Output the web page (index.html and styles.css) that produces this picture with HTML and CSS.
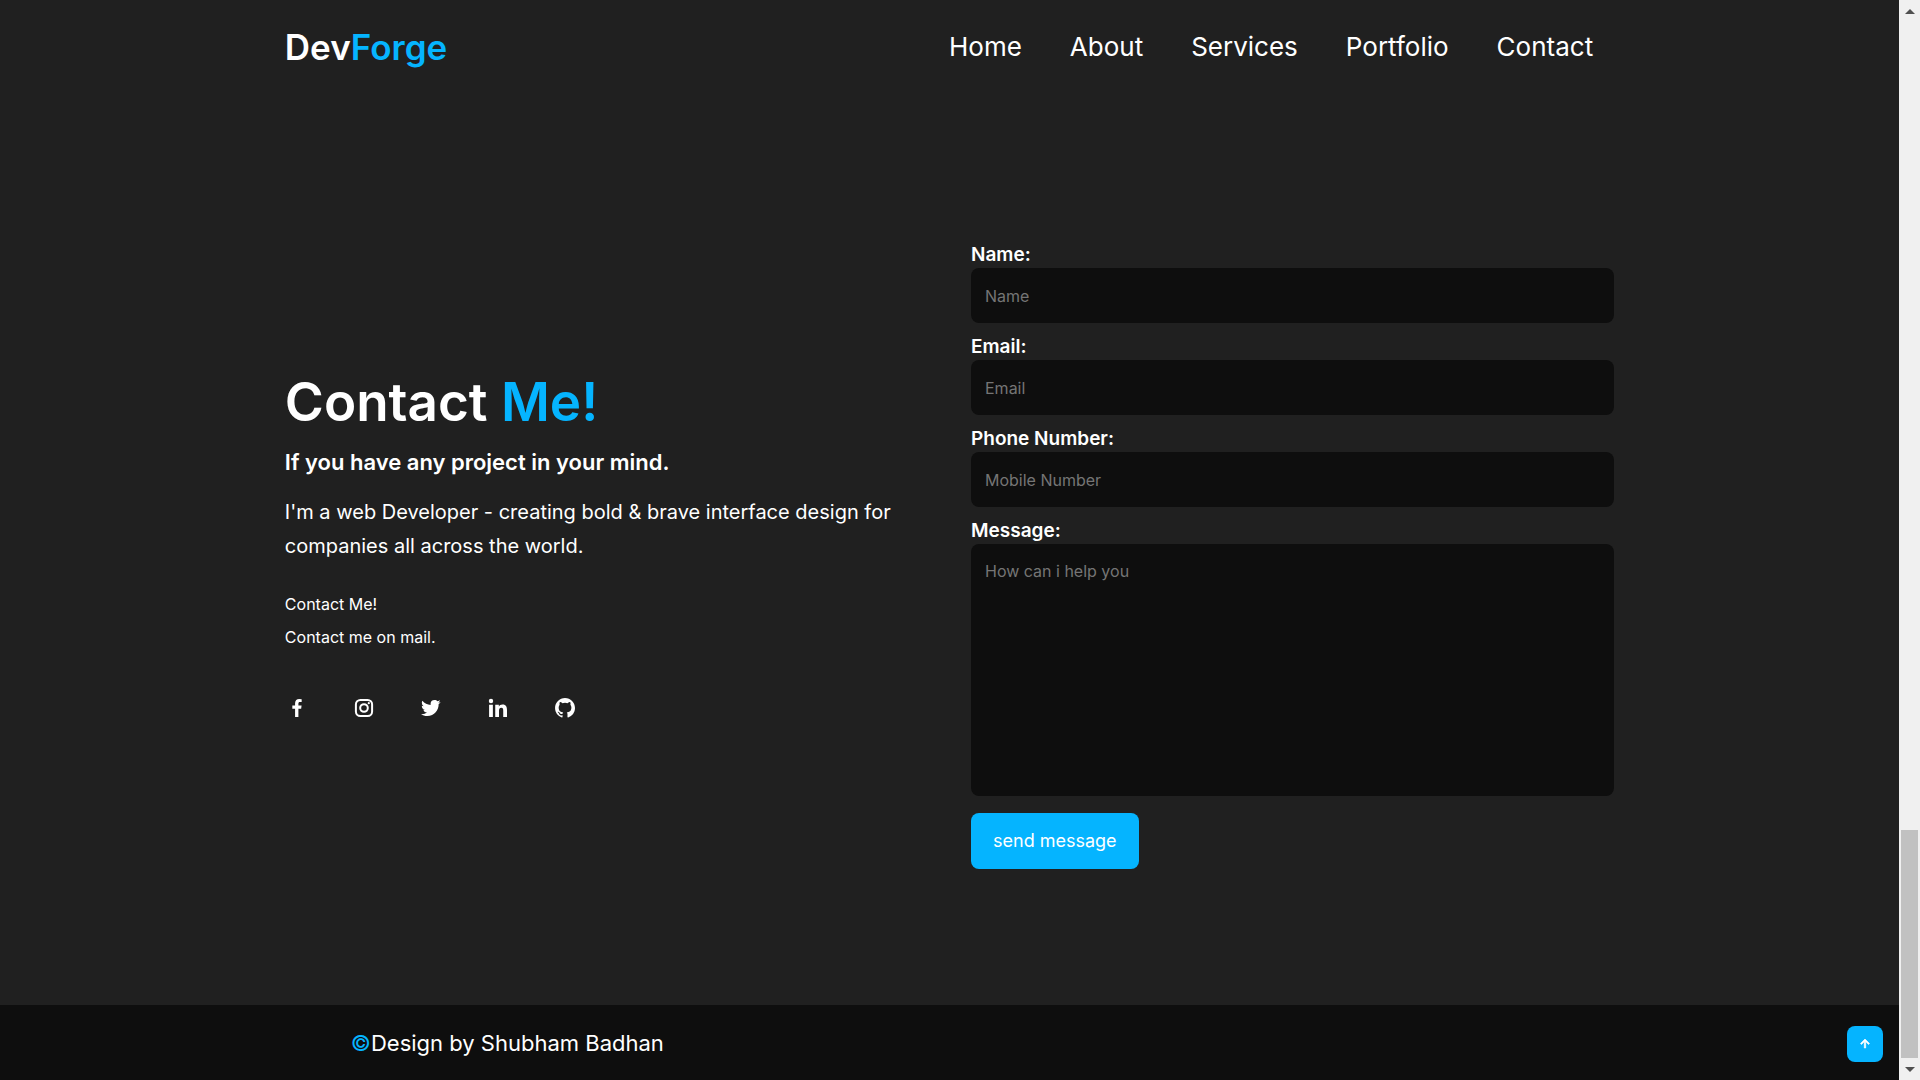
FILE: index.html
```html
<!DOCTYPE html>
<html lang="en">
<head>
<meta charset="utf-8">
<meta name="viewport" content="width=device-width, initial-scale=1">
<title>DevForge</title>
<link rel="stylesheet" href="styles.css">
</head>
<body>
<div class="page">
  <header class="header">
    <a class="logo" href="#home">Dev<span class="accent">Forge</span></a>
    <nav class="nav">
      <a href="#home">Home</a>
      <a href="#about">About</a>
      <a href="#services">Services</a>
      <a href="#portfolio">Portfolio</a>
      <a href="#contact">Contact</a>
    </nav>
  </header>

  <main class="contact" id="contact">
    <section class="intro">
      <h1 class="title">Contact <span class="accent">Me!</span></h1>
      <h2 class="subtitle">If you have any project in your mind.</h2>
      <p class="lead">I'm a web Developer - creating bold &amp; brave interface design for companies all across the world.</p>
      <ul class="notes">
        <li>Contact Me!</li>
        <li>Contact me on mail.</li>
      </ul>
      <div class="social">
        <a href="#facebook" aria-label="Facebook"><svg viewBox="0 0 24 24"><path d="M13.397 20.997v-8.196h2.765l.411-3.209h-3.176V7.548c0-.926.258-1.56 1.587-1.56h1.684V3.127A22.336 22.336 0 0 0 14.201 3c-2.444 0-4.122 1.492-4.122 4.231v2.355H7.332v3.209h2.753v8.202h3.312z"/></svg></a>
        <a href="#instagram" aria-label="Instagram"><svg viewBox="0 0 24 24"><rect class="line" x="3.9" y="3.9" width="16.2" height="16.2" rx="4.5"/><circle class="line" cx="12" cy="12" r="3.8"/><circle cx="16.8" cy="7.2" r="1.1"/></svg></a>
        <a href="#twitter" aria-label="Twitter"><svg viewBox="0 0 24 24"><path d="M19.633 7.997c.013.175.013.349.013.523 0 5.325-4.053 11.461-11.46 11.461-2.282 0-4.402-.661-6.186-1.809.324.037.636.05.973.05a8.07 8.07 0 0 0 5.001-1.721 4.036 4.036 0 0 1-3.767-2.793c.249.037.499.062.761.062.361 0 .724-.05 1.061-.137a4.027 4.027 0 0 1-3.23-3.953v-.05c.537.299 1.16.486 1.82.511a4.022 4.022 0 0 1-1.796-3.354c0-.748.199-1.434.548-2.032a11.457 11.457 0 0 0 8.306 4.215c-.062-.3-.1-.611-.1-.923a4.026 4.026 0 0 1 4.028-4.028c1.16 0 2.207.486 2.943 1.272a7.957 7.957 0 0 0 2.556-.973 4.02 4.02 0 0 1-1.771 2.22 8.073 8.073 0 0 0 2.319-.624 8.645 8.645 0 0 1-2.019 2.083z"/></svg></a>
        <a href="#linkedin" aria-label="LinkedIn"><svg viewBox="0 0 24 24"><circle cx="4.983" cy="5.009" r="2.188"/><path d="M9.237 8.855v12.139h3.769v-6.003c0-1.584.298-3.118 2.262-3.118 1.937 0 1.961 1.811 1.961 3.218v5.904H21v-6.657c0-3.27-.704-5.783-4.526-5.783-1.835 0-3.065 1.007-3.568 1.96h-.051v-1.66H9.237zm-6.142 0H6.87v12.139H3.095z"/></svg></a>
        <a href="#github" aria-label="GitHub"><svg viewBox="0 0 24 24"><path d="M12.026 2c-5.509 0-9.974 4.465-9.974 9.974 0 4.406 2.857 8.145 6.821 9.465.499.09.679-.217.679-.481 0-.237-.008-.865-.011-1.696-2.775.602-3.361-1.338-3.361-1.338-.452-1.152-1.107-1.459-1.107-1.459-.905-.619.069-.605.069-.605 1.002.07 1.527 1.028 1.527 1.028.89 1.524 2.336 1.084 2.902.829.091-.645.351-1.085.635-1.334-2.214-.251-4.542-1.107-4.542-4.93 0-1.087.389-1.979 1.024-2.675-.101-.253-.446-1.268.099-2.64 0 0 .837-.269 2.742 1.021a9.582 9.582 0 0 1 2.496-.336 9.554 9.554 0 0 1 2.496.336c1.906-1.291 2.742-1.021 2.742-1.021.545 1.372.203 2.387.099 2.64.64.696 1.024 1.587 1.024 2.675 0 3.833-2.33 4.675-4.552 4.922.355.308.675.916.675 1.846 0 1.334-.012 2.41-.012 2.737 0 .267.178.577.687.479C19.146 20.115 22 16.379 22 11.974 22 6.465 17.535 2 12.026 2z"/></svg></a>
      </div>
    </section>

    <form class="form">
      <div class="field">
        <label for="name">Name:</label>
        <input id="name" type="text" placeholder="Name">
      </div>
      <div class="field">
        <label for="email">Email:</label>
        <input id="email" type="email" placeholder="Email">
      </div>
      <div class="field">
        <label for="phone">Phone Number:</label>
        <input id="phone" type="tel" placeholder="Mobile Number">
      </div>
      <div class="field">
        <label for="message">Message:</label>
        <textarea id="message" placeholder="How can i help you"></textarea>
      </div>
      <button class="send" type="submit">send message</button>
    </form>
  </main>

  <footer class="footer">
    <p class="copyright"><span class="accent">©</span>Design by Shubham Badhan</p>
    <a class="to-top" href="#home" aria-label="Back to top"><svg viewBox="0 0 24 24"><path d="m11 8.414V18h2V8.414l4.293 4.293 1.414-1.414L12 4.586l-6.707 6.707 1.414 1.414z"/></svg></a>
  </footer>
</div>

<div class="scrollbar" aria-hidden="true">
  <svg class="scroll-arrow" viewBox="0 0 10 5"><path d="M5 0l5 5H0z"/></svg>
  <div class="track"><div class="thumb"></div></div>
  <svg class="scroll-arrow" viewBox="0 0 10 5"><path d="M0 0h10L5 5z"/></svg>
</div>
</body>
</html>
```

FILE: styles.css
```css
:root {
  --bg: #202020;
  --dark: #0e0e0e;
  --accent: #05b4ff;
  --side: 15%;
}

* {
  box-sizing: border-box;
  margin: 0;
  padding: 0;
}

body {
  display: flex;
  min-height: 100vh;
  background: var(--bg);
  color: #fff;
  font-family: Inter, "Open Sans", sans-serif;
  font-size: 16px;
}

a {
  color: inherit;
  text-decoration: none;
}

svg {
  display: block;
  fill: currentColor;
}

.accent {
  color: var(--accent);
}

.page {
  flex: 1;
  display: flex;
  flex-direction: column;
}

/* Header */
.header {
  display: flex;
  align-items: center;
  justify-content: space-between;
  padding: 24px var(--side);
}

.logo {
  font-size: 35px;
  line-height: 46px;
  font-weight: 600;
}

.nav {
  display: flex;
  gap: 48px;
  padding-right: 21px;
  font-size: 26px;
  line-height: 40px;
}

/* Contact section */
.contact {
  flex: 1;
  display: grid;
  grid-template-columns: 1fr 1fr;
  align-content: center;
  align-items: center;
  gap: 43px;
  padding: 11px var(--side) 0;
}

.intro {
  padding-bottom: 20px;
}

.title {
  font-size: 53px;
  line-height: 64px;
  font-weight: 600;
}

.subtitle {
  margin-top: 13px;
  font-size: 22px;
  line-height: 30px;
  font-weight: 600;
}

.lead {
  margin-top: 18px;
  font-size: 20px;
  line-height: 34px;
}

.notes {
  margin-top: 25px;
  list-style: none;
  line-height: 33px;
}

.social {
  display: flex;
  gap: 43px;
  margin-top: 42px;
}

.social svg {
  width: 24px;
  height: 24px;
}

.social .line {
  fill: none;
  stroke: currentColor;
  stroke-width: 2;
}

/* Form */
.form {
  display: flex;
  flex-direction: column;
  align-items: flex-start;
}

.field {
  display: flex;
  flex-direction: column;
  width: 100%;
  margin-bottom: 10px;
}

.field label {
  font-size: 19px;
  line-height: 27px;
  font-weight: 600;
}

.field input,
.field textarea {
  width: 100%;
  height: 55px;
  padding: 14px;
  border: 0;
  border-radius: 8px;
  outline: 0;
  background: var(--dark);
  color: #fff;
  font: inherit;
  line-height: 27px;
}

.field textarea {
  height: 252px;
  resize: none;
}

.field ::placeholder {
  color: #757575;
}

.send {
  margin-top: 7px;
  padding: 14px 22px;
  border: 0;
  border-radius: 8px;
  background: var(--accent);
  color: #fff;
  font: inherit;
  font-size: 18px;
  line-height: 28px;
}

/* Footer */
.footer {
  display: flex;
  align-items: center;
  justify-content: space-between;
  padding: 20px 16px 18px calc(var(--side) + 66px);
  background: var(--dark);
}

.copyright {
  font-size: 22px;
  line-height: 37px;
}

.to-top {
  padding: 10px;
  border-radius: 8px;
  background: var(--accent);
}

.to-top svg {
  width: 16px;
  height: 16px;
  stroke: currentColor;
  stroke-width: 1;
}

/* Scrollbar */
.scrollbar {
  display: flex;
  flex-direction: column;
  align-items: center;
  width: 21px;
  padding: 9px 2px 8px;
  background: #f0f0f0;
}

.scroll-arrow {
  width: 10px;
  height: 5px;
  fill: #505050;
}

.track {
  flex: 1;
  display: flex;
  align-items: flex-end;
  width: 100%;
  padding: 8px 0 9px;
}

.thumb {
  width: 100%;
  height: 22%;
  background: #c1c1c1;
}
```
